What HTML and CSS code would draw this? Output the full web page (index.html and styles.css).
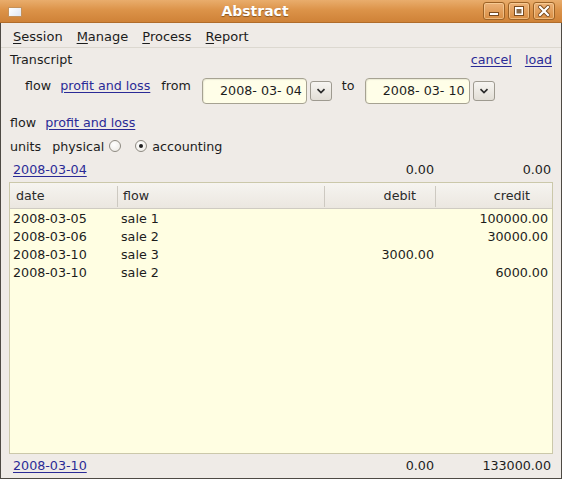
FILE: index.html
```html
<!DOCTYPE html>
<html>
<head>
<meta charset="utf-8">
<link rel="stylesheet" href="styles.css">
</head>
<body>
<div class="window">
  <div class="titlebar">
    <div class="tb-iconwrap"><div class="tb-icon"></div></div>
    <div class="tb-title">Abstract</div>
    <div class="tb-buttons">
      <div class="tb-btn">
        <svg width="12" height="12" viewBox="0 0 12 12"><rect x="1.5" y="7.5" width="9" height="3" fill="#fff" stroke="#7a4a1c" stroke-width="1"/></svg>
      </div>
      <div class="tb-btn">
        <svg width="12" height="12" viewBox="0 0 12 12"><rect x="1.5" y="1.5" width="9" height="9" fill="#fff" stroke="#7a4a1c" stroke-width="1"/><rect x="3.5" y="4" width="5" height="4.5" fill="#8a6a48"/></svg>
      </div>
      <div class="tb-btn">
        <svg width="12" height="12" viewBox="0 0 12 12"><path d="M2 2 L10 10 M10 2 L2 10" stroke="#7a4a1c" stroke-width="4" stroke-linecap="square"/><path d="M2 2 L10 10 M10 2 L2 10" stroke="#fff" stroke-width="2.2" stroke-linecap="square"/></svg>
      </div>
    </div>
  </div>
  <div class="menubar">
    <span class="menu"><u>S</u>ession</span>
    <span class="menu"><u>M</u>anage</span>
    <span class="menu"><u>P</u>rocess</span>
    <span class="menu"><u>R</u>eport</span>
  </div>
  <div class="content">
    <div class="row-transcript">
      <span>Transcript</span>
      <span class="spacer"></span>
      <a class="link">cancel</a>
      <a class="link load">load</a>
    </div>
    <div class="row-dates">
      <span class="lbl lbl-flow">flow</span>
      <a class="link lbl lbl-link">profit and loss</a>
      <span class="lbl lbl-from">from</span>
      <div class="datebox">2008- 03- 04</div>
      <div class="dd"><svg width="10" height="6" viewBox="0 0 10 6"><path d="M1.5 1.2 L5 4.5 L8.5 1.2" fill="none" stroke="#2a2a2a" stroke-width="1.7"/></svg></div>
      <span class="lbl lbl-to">to</span>
      <div class="datebox">2008- 03- 10</div>
      <div class="dd"><svg width="10" height="6" viewBox="0 0 10 6"><path d="M1.5 1.2 L5 4.5 L8.5 1.2" fill="none" stroke="#2a2a2a" stroke-width="1.7"/></svg></div>
    </div>
    <div class="row-flow">
      <span>flow</span>
      <a class="link flow-link">profit and loss</a>
    </div>
    <div class="row-units">
      <span>units</span>
      <span class="physical">physical</span>
      <span class="radio"></span>
      <span class="radio checked"></span>
      <span class="accounting">accounting</span>
    </div>
    <div class="totals">
      <a class="link t-date">2008-03-04</a>
      <span></span>
      <span class="t-debit">0.00</span>
      <span class="t-credit">0.00</span>
    </div>
    <div class="table">
      <div class="thead">
        <div class="th th-date">date</div>
        <div class="th th-flow">flow</div>
        <div class="th th-debit">debit</div>
        <div class="th th-credit">credit</div>
      </div>
      <div class="tbody">
        <div class="tr"><span class="td-date">2008-03-05</span><span class="td-flow">sale 1</span><span class="td-debit"></span><span class="td-credit">100000.00</span></div>
        <div class="tr"><span class="td-date">2008-03-06</span><span class="td-flow">sale 2</span><span class="td-debit"></span><span class="td-credit">30000.00</span></div>
        <div class="tr"><span class="td-date">2008-03-10</span><span class="td-flow">sale 3</span><span class="td-debit">3000.00</span><span class="td-credit"></span></div>
        <div class="tr"><span class="td-date">2008-03-10</span><span class="td-flow">sale 2</span><span class="td-debit"></span><span class="td-credit">6000.00</span></div>
      </div>
    </div>
    <div class="totals footer">
      <a class="link t-date">2008-03-10</a>
      <span></span>
      <span class="t-debit">0.00</span>
      <span class="t-credit">133000.00</span>
    </div>
  </div>
</div>
</body>
</html>
```
FILE: styles.css
```css
html, body {
  margin: 0;
  padding: 0;
}
body {
  width: 562px;
  height: 479px;
  overflow: hidden;
  background: #efebe7;
  font-family: "DejaVu Sans", "Liberation Sans", sans-serif;
  font-size: 12.7px;
  color: #1c1c1c;
}
.window {
  box-sizing: border-box;
  width: 562px;
  height: 479px;
  border: 1px solid #4e4a44;
  border-top: none;
  display: flex;
  flex-direction: column;
  background: #efebe7;
}
.titlebar {
  height: 23px;
  margin: 0 -1px;
  display: flex;
  align-items: center;
  background: linear-gradient(#e9ad6c, #dc9349 45%, #cf8237 100%);
  border-bottom: 1px solid #b06c2a;
  box-sizing: border-box;
}
.tb-iconwrap {
  width: 30px;
  display: flex;
  justify-content: flex-start;
  padding-left: 8px;
  box-sizing: border-box;
}
.tb-icon {
  width: 14px;
  height: 10px;
  margin-top: 1px;
  background: linear-gradient(135deg, #ffffff, #dfe6f2);
  border: 1px solid #c4915a;
  box-sizing: border-box;
}
.tb-title {
  flex: 1;
  text-align: center;
  color: #ffffff;
  font-weight: bold;
  font-size: 14px;
  text-shadow: 0 1px 1px #8a5520;
}
.tb-buttons {
  display: flex;
  gap: 3px;
  padding-right: 7px;
  width: 82px;
  box-sizing: border-box;
  justify-content: flex-end;
}
.tb-btn {
  width: 22px;
  height: 18px;
  box-sizing: border-box;
  border: 1px solid #9c6226;
  border-radius: 3px;
  background: linear-gradient(#ecb278, #d88d42);
  box-shadow: inset 0 0 0 1px rgba(255, 220, 170, 0.55);
  display: flex;
  align-items: center;
  justify-content: center;
}
.menubar {
  height: 25px;
  display: flex;
  align-items: center;
  padding-left: 5px;
  padding-top: 2px;
  box-sizing: border-box;
  border-bottom: 1px solid #dcd8d0;
}
.menu {
  padding: 0 7px;
  font-size: 13px;
  color: #1c1c1c;
}
.menu u {
  text-decoration: underline;
  text-underline-offset: 2px;
}
.content {
  flex: 1;
  display: flex;
  flex-direction: column;
  padding: 0 8px 4px 8px;
  min-height: 0;
}
.link {
  color: #2a2a96;
  text-decoration: underline;
  text-underline-offset: 2px;
}
.row-transcript {
  height: 19px;
  display: flex;
  align-items: center;
  padding: 2px 1px 0 1px;
}
.spacer { flex: 1; }
.load { margin-left: 13px; }
.row-dates {
  margin-top: 9px;
  height: 26px;
  display: flex;
  align-items: center;
}
.lbl {
  align-self: flex-start;
  line-height: 13px;
  margin-top: 1px;
}
.lbl-flow { margin-left: 16px; }
.lbl-link { margin-left: 9px; }
.lbl-from { margin-left: 11px; margin-right: 11px; }
.lbl-to { margin-left: 10px; margin-right: 10px; }
.datebox {
  width: 105px;
  height: 26px;
  box-sizing: border-box;
  border: 1px solid #a6a292;
  border-radius: 4px;
  background: #fffee8;
  box-shadow: inset 1px 1px 1px rgba(0, 0, 0, 0.08);
  text-align: right;
  padding-right: 4px;
  line-height: 24px;
}
.dd {
  width: 22px;
  height: 20px;
  margin-left: 3px;
  box-sizing: border-box;
  border: 1px solid #9e9a90;
  border-radius: 3px;
  background: linear-gradient(#f7f5f2, #e2ded6);
  display: flex;
  align-items: center;
  justify-content: center;
}
.row-flow {
  margin-top: 9px;
  height: 18px;
  display: flex;
  align-items: center;
  padding-left: 1px;
}
.flow-link { margin-left: 9px; }
.row-units {
  margin-top: 6px;
  height: 18px;
  display: flex;
  align-items: center;
  padding-left: 1px;
}
.physical { margin-left: 11px; }
.radio {
  width: 12px;
  height: 12px;
  box-sizing: border-box;
  border: 1px solid #8e8a82;
  border-radius: 50%;
  background: radial-gradient(circle at 40% 35%, #ffffff, #ebe8e2);
  margin-left: 5px;
  position: relative;
}
.radio.checked {
  margin-left: 14px;
}
.radio.checked::after {
  content: "";
  position: absolute;
  left: 3px;
  top: 3px;
  width: 4px;
  height: 4px;
  border-radius: 50%;
  background: #1e1e1e;
}
.accounting { margin-left: 5px; }
.totals {
  margin-top: 5px;
  height: 18px;
  display: grid;
  grid-template-columns: 107px 207px 111px 116px;
  align-items: center;
  padding-left: 1px;
}
.t-date { padding-left: 3px; }
.t-debit { text-align: right; padding-right: 1px; }
.t-credit { text-align: right; }
.table {
  margin-top: 4px;
  flex: 1;
  border: 1px solid #cbc8aa;
  background: #fffee2;
  display: flex;
  flex-direction: column;
  min-height: 0;
}
.thead {
  height: 26px;
  box-sizing: border-box;
  display: grid;
  grid-template-columns: 107px 207px 111px 116px;
  background: linear-gradient(#f6f4f0, #ebe7e0);
  border-bottom: 1px solid #cfcbc2;
}
.th {
  line-height: 25px;
  color: #2a2a2a;
  position: relative;
}
.th + .th::before {
  content: "";
  position: absolute;
  left: 0;
  top: 3px;
  bottom: 1px;
  width: 1px;
  background: #cdc9c1;
}
.th-date { padding-left: 6px; }
.th-flow { padding-left: 6px; }
.th-debit { text-align: right; padding-right: 19px; }
.th-credit { text-align: right; padding-right: 21px; }
.tbody {
  flex: 1;
}
.tr {
  height: 18px;
  display: grid;
  grid-template-columns: 107px 207px 111px 116px;
  align-items: center;
}
.td-date { padding-left: 3px; }
.td-flow { padding-left: 4px; }
.td-debit { text-align: right; padding-right: 1px; }
.td-credit { text-align: right; padding-right: 3px; }
.footer {
  margin-top: 2px;
}
```
